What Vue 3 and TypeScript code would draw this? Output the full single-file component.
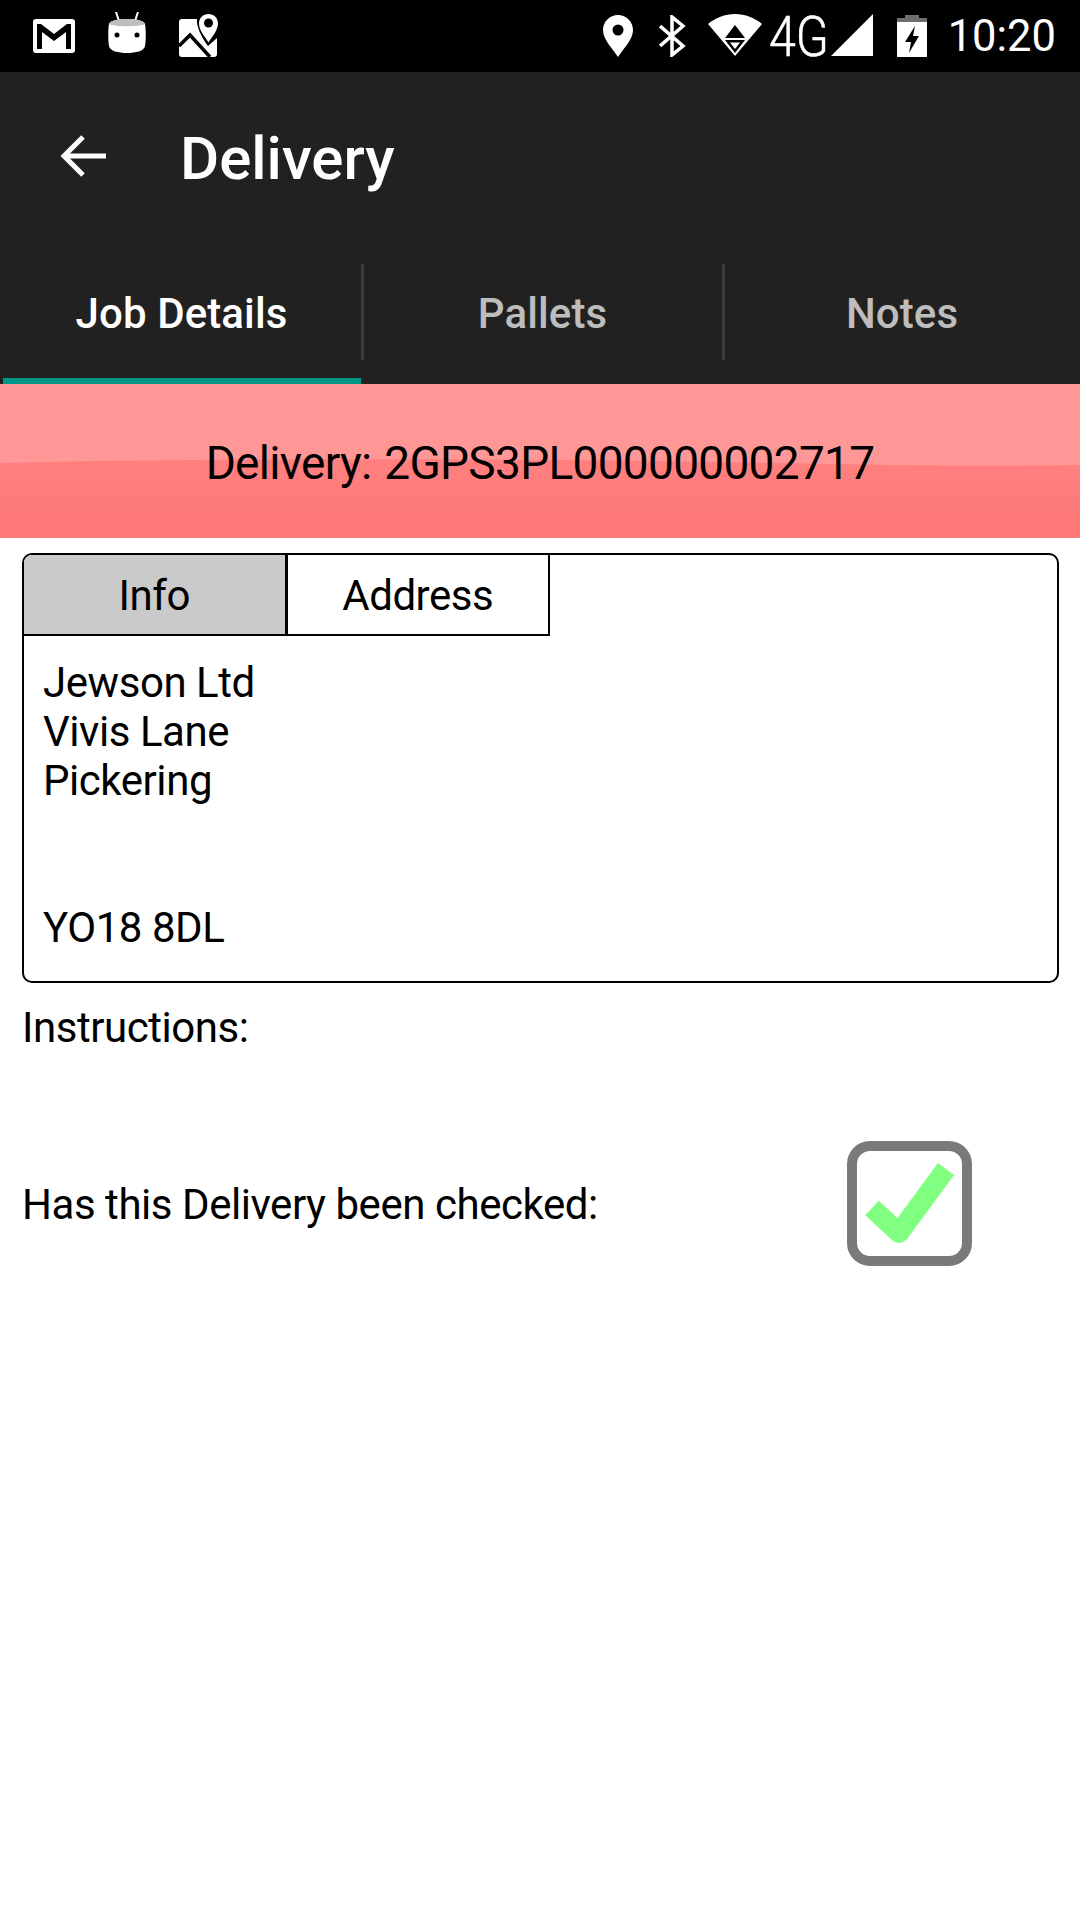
<template>
  <div class="screen">
    <div class="status-bar">
      <svg class="ic-gmail" width="42" height="34" viewBox="0 0 42 34">
        <rect width="42" height="34" rx="3" fill="#fff" />
        <path d="M4 5h4l13 10L34 5h4v25h-5V13L21 22 9 13v17H4z" fill="#000" />
      </svg>
      <svg class="ic-android" width="38" height="42" viewBox="0 0 38 42">
        <path d="M8 0l3 9M30 0l-3 9" stroke="#fff" stroke-width="2" />
        <path d="M19 7c7 0 17 1 18 5 1 5 1 17 0 22-1 5-9 7-18 7S2 39 1 34C0 29 0 17 1 12 2 8 12 7 19 7z" fill="#fff" />
        <path d="M1 12c1-4 11-5 18-5s17 1 18 5c-5 3-31 3-36 0z" fill="#bdbdbd" />
        <circle cx="9" cy="23" r="2.500" fill="#000" />
        <circle cx="29" cy="23" r="2.500" fill="#000" />
      </svg>
      <svg class="ic-maps" width="40" height="45" viewBox="0 0 40 45">
        <path d="M3 6h15c-1 6 4 18 11 27l9-8v16a3 3 0 0 1-3 3H3a3 3 0 0 1-3-3V9a3 3 0 0 1 3-3z" fill="#fff" />
        <path d="M0 33L11 22l20 22" fill="none" stroke="#000" stroke-width="3.500" />
        <path d="M29.500 1c5.500 0 9.500 4 9.500 9.500 0 7-6 13-9.500 19-3.500-6-9.500-12-9.500-19C20 5 24 1 29.500 1z" fill="#fff" />
        <circle cx="29.500" cy="10" r="4.500" fill="#000" />
      </svg>
      <div class="status-spacer"></div>
      <svg class="ic-pin" width="30" height="42" viewBox="0 0 30 42">
        <path d="M15 0c8.300 0 15 6.700 15 15 0 10-10 19-15 27C10 34 0 25 0 15 0 6.700 6.700 0 15 0z" fill="#fff" />
        <circle cx="15" cy="15" r="5.500" fill="#000" />
      </svg>
      <svg class="ic-bt" width="27" height="42" viewBox="0 0 27 42">
        <path d="M1 11l23 20-11 9V2l11 9L1 31" fill="none" stroke="#fff" stroke-width="3.500" />
      </svg>
      <svg class="ic-wifi" width="54" height="42" viewBox="0 0 54 42">
        <path d="M0 10C7 4 17 0 27 0s20 4 27 10L27 42z" fill="#fff" />
        <path d="M27 11l-10 13h20z" fill="#000" />
        <path d="M17 26h20L27 39z" fill="#000" />
        <path d="M22 28.500h10L27 35z" fill="#fff" />
      </svg>
      <span class="net">4G</span>
      <svg class="ic-signal" width="42" height="42" viewBox="0 0 42 42">
        <path d="M42 0v42H0z" fill="#fff" />
      </svg>
      <svg class="ic-battery" width="30" height="42" viewBox="0 0 30 42">
        <path d="M8 0h14v3h8v4H0V3h8z" fill="#6e6e6e" />
        <path d="M0 7h30v35H0z" fill="#fff" />
        <path d="M18 11l-10 16h6l-2 11 10-17h-6z" fill="#000" />
      </svg>
      <span class="time">10:20</span>
    </div>

    <header class="app-bar">
      <svg class="back" width="48" height="48" viewBox="0 0 48 48">
        <path d="M46 24H5M23 5L4 24l19 19" fill="none" stroke="#fff" stroke-width="5" />
      </svg>
      <h1>Delivery</h1>
    </header>

    <nav class="main-tabs">
      <div v-for="(tab, index) in mainTabs" :key="tab" class="main-tab" :class="{ active: index === 0 }">
        <span>{{ tab }}</span>
      </div>
    </nav>

    <div class="banner">
      <svg class="gloss" viewBox="0 0 1080 154" preserveAspectRatio="none">
        <path d="M0 0h1080v81C900 84 800 78 560 76 300 74 120 76 0 79z" fill="#ff9797" />
      </svg>
      <span>Delivery: 2GPS3PL000000002717</span>
    </div>

    <section class="card">
      <div class="card-tabs">
        <div class="card-tab selected">Info</div>
        <div class="card-tab">Address</div>
      </div>
      <div class="card-body">
        <div v-for="(line, index) in addressLines" :key="index" class="line">{{ line }}</div>
      </div>
    </section>

    <div class="instructions">Instructions:</div>

    <div class="checked-row">
      <span>Has this Delivery been checked:</span>
      <svg class="checkbox" width="125" height="125" viewBox="0 0 125 125">
        <rect x="5" y="5" width="115" height="115" rx="18" fill="#fff" stroke="#7a7a7a" stroke-width="10" />
        <path d="M25 67l27 25 47-64" fill="none" stroke="#80ff80" stroke-width="20" stroke-linejoin="round" />
      </svg>
    </div>
  </div>
</template>

<script setup lang="ts">
const mainTabs: string[] = ['Job Details', 'Pallets', 'Notes']
const addressLines: string[] = ['Jewson Ltd', 'Vivis Lane', 'Pickering', '\u00a0', '\u00a0', 'YO18 8DL']
</script>

<style>
html,
body {
  margin: 0;
  background: #fff;
}
</style>

<style scoped>
.screen {
  width: 1080px;
  height: 1920px;
  background: #fff;
  font-family: Roboto, "Liberation Sans", sans-serif;
  color: #000;
  overflow: hidden;
}

.status-bar {
  height: 72px;
  background: #000;
  display: flex;
  align-items: flex-start;
  color: #fff;
}

.status-bar svg {
  flex: none;
}

.status-spacer {
  flex: 1;
}

.ic-gmail {
  margin: 19px 0 0 33px;
}

.ic-android {
  margin: 12px 0 0 33px;
}

.ic-maps {
  margin: 13px 0 0 33px;
}

.ic-pin {
  margin-top: 15px;
}

.ic-bt {
  margin: 15px 0 0 26px;
}

.ic-wifi {
  margin: 14px 0 0 22px;
}

.net {
  margin: 5px 0 0 7px;
  width: 56px;
  font-size: 55px;
  line-height: 64px;
  font-weight: 300;
  -webkit-text-stroke: 0.5px #fff;
  transform: scaleX(0.88);
  transform-origin: left center;
}

.ic-signal {
  margin: 14px 0 0 6px;
}

.ic-battery {
  margin: 15px 0 0 24px;
}

.time {
  margin: 12px 24px 0 21px;
  font-size: 43.500px;
  line-height: 50px;
}

.app-bar {
  height: 192px;
  background: #212121;
  display: flex;
  align-items: flex-start;
}

.back {
  margin: 60px 0 0 60px;
}

.app-bar h1 {
  margin: 54px 0 0 72px;
  font-size: 60px;
  line-height: 66px;
  font-weight: 500;
  color: #fff;
}

.main-tabs {
  height: 120px;
  background: #212121;
  display: grid;
  grid-template-columns: 361px 361px 1fr;
}

.main-tab {
  position: relative;
  display: flex;
  justify-content: center;
  padding: 25px 0 0 2px;
  box-sizing: border-box;
  font-size: 42px;
  line-height: 50px;
  font-weight: 500;
  letter-spacing: 0.1px;
  color: #bdbdbd;
}

.main-tab.active {
  color: #fff;
}

.main-tab.active::before {
  content: "";
  position: absolute;
  left: 3px;
  right: 0;
  bottom: 0;
  height: 6px;
  background: #009688;
}

.main-tab + .main-tab::after {
  content: "";
  position: absolute;
  left: 0;
  top: 0;
  width: 3px;
  height: 96px;
  background: #3c3c3c;
}

.banner {
  position: relative;
  height: 154px;
  box-sizing: border-box;
  padding-top: 4px;
  background: linear-gradient(#ff8888, #ff7777);
  display: flex;
  align-items: center;
  justify-content: center;
  font-size: 46px;
  letter-spacing: -0.7px;
  word-spacing: 2px;
}

.banner span {
  position: relative;
}

.gloss {
  position: absolute;
  left: 0;
  top: 0;
  width: 100%;
  height: 100%;
}

.card {
  margin: 15px 21px 0 22px;
  height: 430px;
  box-sizing: border-box;
  border: 2px solid #000;
  border-radius: 10px;
  overflow: hidden;
  letter-spacing: -0.45px;
}

.card-tabs {
  display: flex;
  height: 79px;
  width: 524px;
  border-bottom: 2px solid #000;
  border-right: 2px solid #000;
  box-sizing: content-box;
}

.card-tab {
  width: 264px;
  display: flex;
  align-items: center;
  justify-content: center;
  padding-top: 2px;
  font-size: 42px;
  border-left: 3px solid #000;
  box-sizing: border-box;
}

.card-tab:first-child {
  width: 261px;
  border-left: none;
}

.card-tab.selected {
  background: #cacaca;
}

.card-body {
  padding: 22px 0 0 19px;
  font-size: 42px;
  line-height: 49px;
}

.instructions {
  margin: 20px 0 0 22px;
  font-size: 42px;
  line-height: 50px;
  letter-spacing: -0.45px;
}

.checked-row {
  margin: 90px 108px 0 22px;
  display: flex;
  align-items: center;
  justify-content: space-between;
  font-size: 42px;
  letter-spacing: -0.45px;
}

.checkbox {
  margin-top: -2px;
}
</style>
